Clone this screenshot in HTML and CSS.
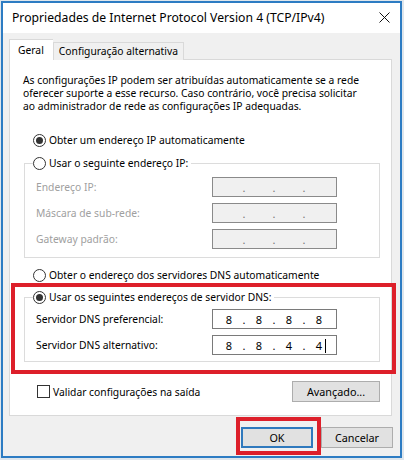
FILE: index.html
```html
<!DOCTYPE html>
<html lang="pt-BR">
<head>
    <meta charset="UTF-8">
    <title>Propriedades de Internet Protocol Version 4 (TCP/IPv4)</title>
    <link rel="stylesheet" href="styles.css">
</head>
<body>
    <div class="window">
        <div class="titlebar">
            <span class="title">Propriedades de Internet Protocol Version 4 (TCP/IPv4)</span>
            <svg class="close" width="11" height="11" viewBox="0 0 11 11">
                <path d="M0.5 0.5 L10.5 10.5 M10.5 0.5 L0.5 10.5" stroke="#111" stroke-width="1" fill="none"/>
            </svg>
        </div>

        <div class="content">
            <div class="tabs">
                <div class="tab active">Geral</div>
                <div class="tab">Configuração alternativa</div>
            </div>

            <div class="panel">
                <p class="intro">As configurações IP podem ser atribuídas automaticamente se a rede oferecer suporte a esse recurso. Caso contrário, você precisa solicitar ao administrador de rede as configurações IP adequadas.</p>

                <div class="radio-row first">
                    <span class="radio checked"></span>Obter um endereço IP automaticamente
                </div>

                <div class="group">
                    <div class="legend"><span class="radio"></span>Usar o seguinte endereço IP:</div>
                    <div class="field-row disabled">
                        <span class="field-label">Endereço IP:</span>
                        <div class="ip-box"><span class="oct"></span><span class="dot">.</span><span class="oct"></span><span class="dot">.</span><span class="oct"></span><span class="dot">.</span><span class="oct"></span></div>
                    </div>
                    <div class="field-row disabled">
                        <span class="field-label">Máscara de sub-rede:</span>
                        <div class="ip-box"><span class="oct"></span><span class="dot">.</span><span class="oct"></span><span class="dot">.</span><span class="oct"></span><span class="dot">.</span><span class="oct"></span></div>
                    </div>
                    <div class="field-row disabled">
                        <span class="field-label">Gateway padrão:</span>
                        <div class="ip-box"><span class="oct"></span><span class="dot">.</span><span class="oct"></span><span class="dot">.</span><span class="oct"></span><span class="dot">.</span><span class="oct"></span></div>
                    </div>
                </div>

                <div class="radio-row dns-auto">
                    <span class="radio"></span>Obter o endereço dos servidores DNS automaticamente
                </div>

                <div class="group dns">
                    <div class="legend"><span class="radio checked"></span>Usar os seguintes endereços de servidor DNS:</div>
                    <div class="field-row">
                        <span class="field-label">Servidor DNS preferencial:</span>
                        <div class="ip-box"><span class="oct">8</span><span class="dot">.</span><span class="oct">8</span><span class="dot">.</span><span class="oct">8</span><span class="dot">.</span><span class="oct">8</span></div>
                    </div>
                    <div class="field-row">
                        <span class="field-label">Servidor DNS alternativo:</span>
                        <div class="ip-box"><span class="oct">8</span><span class="dot">.</span><span class="oct">8</span><span class="dot">.</span><span class="oct">4</span><span class="dot">.</span><span class="oct">4<span class="caret"></span></span></div>
                    </div>
                </div>

                <div class="check-row">
                    <span class="checkbox"></span>
                    <span class="check-label">Validar configurações na saída</span>
                    <button class="btn advanced">Avançado...</button>
                </div>
            </div>

            <div class="dialog-buttons">
                <button class="btn ok">OK</button>
                <button class="btn">Cancelar</button>
            </div>
        </div>

        <!-- marcações vermelhas por cima do diálogo -->
        <div class="mark mark-dns"></div>
        <div class="mark mark-ok"></div>
    </div>
</body>
</html>
```

FILE: styles.css
```css
* { box-sizing: border-box; }

body {
    margin: 0; padding: 1px 0 0 1px;
    background: #dfe6ec;
    font-family: "Noto Sans", "Open Sans", sans-serif;
    font-size: 10.3px; color: #000;
}

.window {
    position: relative;
    width: 401px; height: 457px;
    border: 2px solid #2d7cc3;
    background: #f0f0f0;
    display: flex; flex-direction: column;
}

.titlebar {
    height: 30px; background: #fff;
    display: flex; align-items: center; justify-content: space-between;
    padding: 0 10px 0 9px;
}
.title { font-size: 12.2px; margin-top: -1px; }
.close { margin-top: -1px; }

.content { padding: 0 8px 0 6px; flex: 1; display: flex; flex-direction: column; }

.tabs { display: flex; align-items: flex-end; height: 27px; margin-bottom: -1px; }
.tab {
    height: 18px; padding: 0 5px;
    border: 1px solid #d9d9d9; border-bottom: none;
    background: #f0f0f0; line-height: 17px;
    position: relative;
}
.tab.active {
    height: 21px; background: #fff; z-index: 1;
    padding: 0 9px 0 8px; line-height: 20px;
    border-right: none;
}

.panel {
    background: #fff; border: 1px solid #d9d9d9;
    height: 357px;
    padding: 14px 11px 0 14px;
}

.intro { margin: 0 0 0 -1px; line-height: 13px; width: 338px; }

.radio-row { display: flex; align-items: center; height: 16px; padding-left: 9px; }
.radio-row.first { margin-top: 19px; }

.radio {
    width: 13px; height: 13px; border-radius: 50%;
    border: 1px solid #333; background: #fff;
    display: inline-flex; align-items: center; justify-content: center;
    margin-right: 3px; flex-shrink: 0;
}
.radio.checked::after {
    content: ''; width: 7px; height: 7px; border-radius: 50%; background: #333;
}

.group {
    border: 1px solid #dcdcdc;
    margin-top: 15px;
    padding: 0 0 8px 11px;
}
.legend {
    display: flex; align-items: center; width: max-content;
    height: 16px; margin: -9px 0 0 -3px; padding: 0 3px 0 0;
    background: #fff;
}

.field-row { display: flex; align-items: center; justify-content: space-between; margin-top: 6px; padding-right: 42px; }
.field-row.disabled { color: #a0a0a0; }

.ip-box {
    width: 125px; height: 20px;
    border: 1px solid #7a7a7a; background: #fff;
    display: flex; align-items: center; padding-left: 4px;
    color: #000; font-size: 11px;
}
.field-row.disabled .ip-box { background: #f0f0f0; border-color: #8a8a8a; color: #777; }
.oct { width: 24px; text-align: center; position: relative; }
.dot { width: 6px; text-align: center; }
.caret {
    position: absolute; right: 5px; top: 1px;
    width: 1px; height: 14px; background: #000;
}

.radio-row.dns-auto { margin-top: 9px; }
.group.dns { margin-top: 14px; padding-bottom: 6px; }
.group.dns .field-row:nth-child(2) { margin-top: 4px; }

.check-row { display: flex; align-items: center; margin-top: 19px; padding-left: 13px; }
.checkbox { width: 13px; height: 13px; border: 1px solid #333; background: #fff; margin-right: 3px; }
.check-label { flex: 1; }

.btn {
    font-family: inherit; font-size: 10.8px; color: #000;
    background: #e1e1e1; border: 1px solid #adadad;
    height: 21px; width: 72px; padding: 0;
}
.btn.advanced { width: 88px; }

.dialog-buttons { display: flex; justify-content: flex-end; gap: 8px; margin: 11px -1px 0 0; }
.btn.ok { border: 2px solid #2f79bd; }

.mark { position: absolute; border: 4px solid #dd1f2a; }
.mark-dns { left: 8px; top: 280px; width: 385px; height: 91px; }
.mark-ok { left: 233px; top: 414px; width: 85px; height: 38px; }
```
